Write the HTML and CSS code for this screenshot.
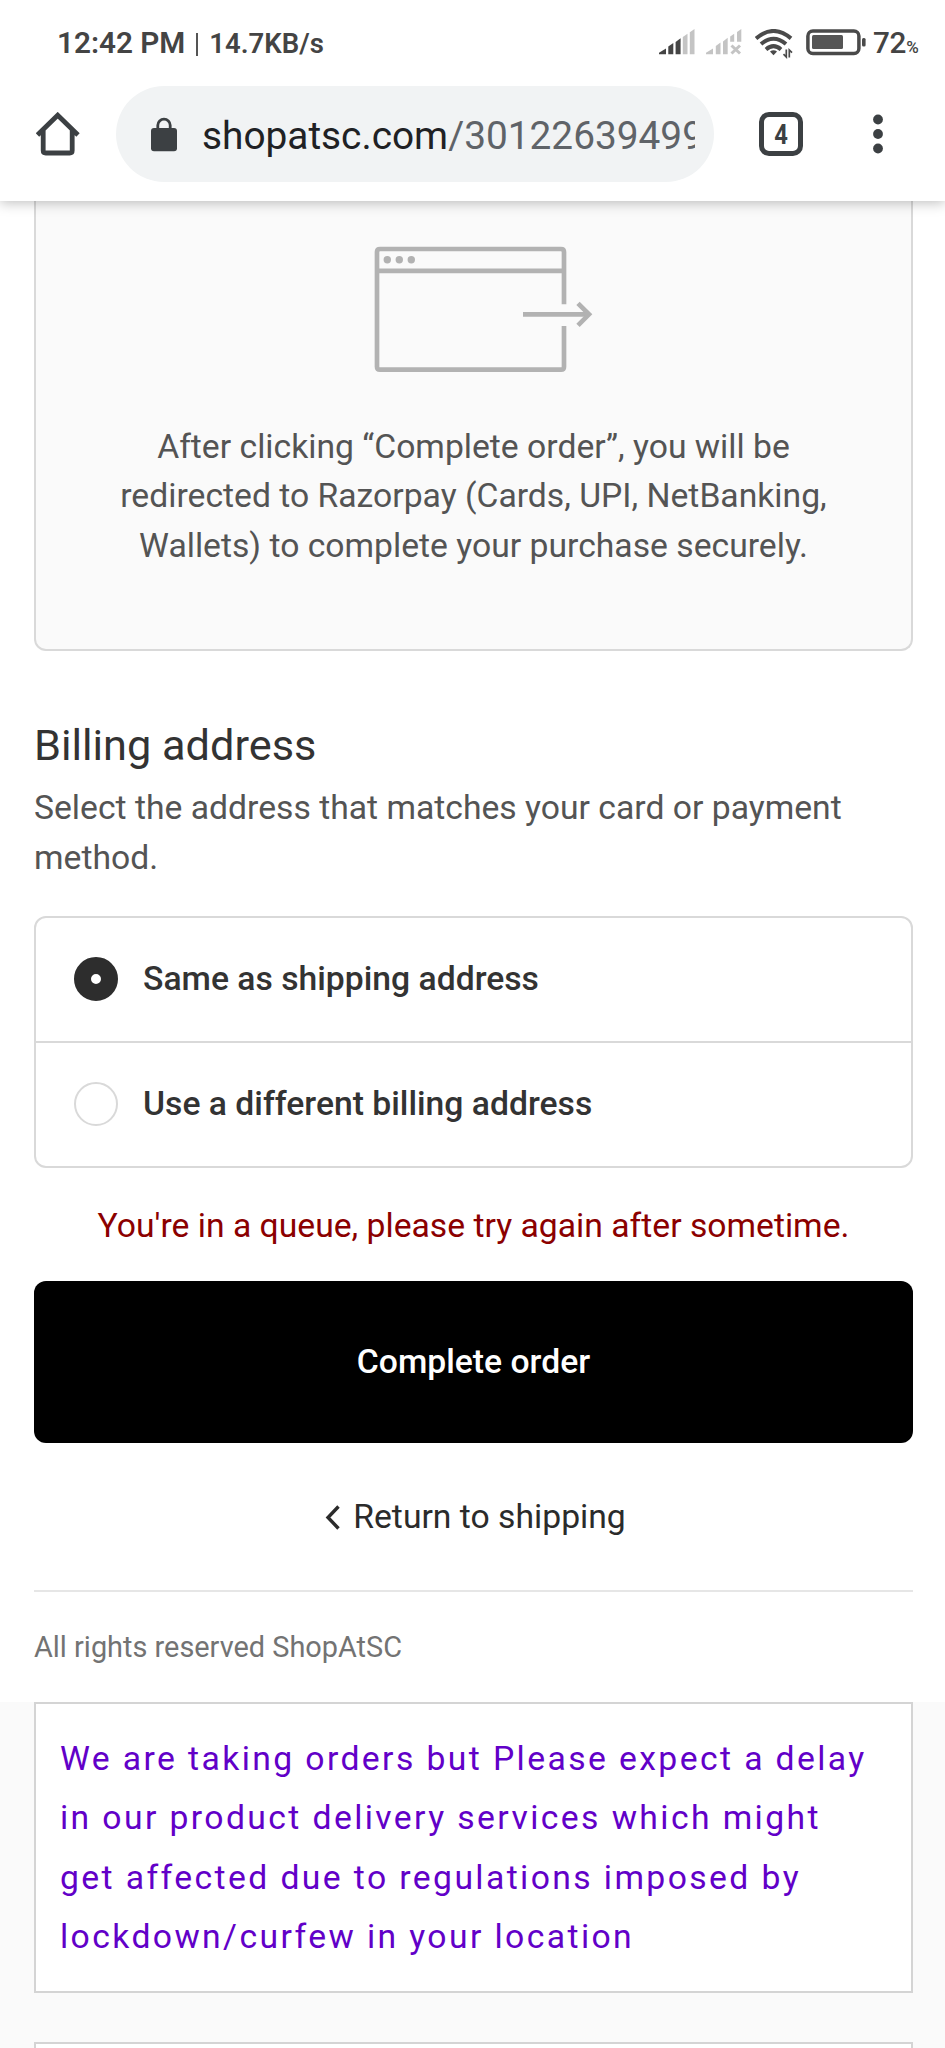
FILE: index.html
```html
<!DOCTYPE html>
<html lang="en">
  <head>
    <meta charset="UTF-8" />
    <meta name="viewport" content="width=device-width, initial-scale=1.0" />
    <title>Payment - ShopAtSC - Checkout</title>
    <link rel="stylesheet" href="styles.css">
  </head>
  <body>
    <header class="browser">
      <div class="status-bar">
        <div class="status-left">
          <span class="clock">12:42 PM</span>
          <span class="divider"></span>
          <span class="speed">14.7KB/s</span>
        </div>
        <div class="status-right">
          <svg class="signal" width="36" height="26" viewBox="0 0 36 26">
            <g fill="#444">
              <path d="M0 25.3v-1.5l7-4.3v5.8z" />
              <path d="M9.3 25.3V17.5l5-3.6v11.4z" />
              <path d="M16.6 25.3V13l5-3.8v16.1z" />
            </g>
            <g fill="#c4c4c4">
              <path d="M23.8 25.3V8l4.7-3.2v20.5z" />
              <path d="M30.8 25.3V3.2L35.5 0v25.3z" />
            </g>
          </svg>
          <svg class="signal-off" width="36" height="26" viewBox="0 0 36 26">
            <g fill="#c4c4c4">
              <path d="M0 25.3v-1.5l7-4.3v5.8z" />
              <path d="M9.8 25.3V17l4.7-3.6v11.9z" />
              <path d="M17 25.3V12.4l4.7-3.6v16.5z" />
              <path d="M24.2 12.8V7.6l4-2.8v8z" />
              <path d="M31 12.8V3L35.3 0v12.8z" />
            </g>
            <path d="M25.5 16.5l8.5 8M34 16.5l-8.5 8" stroke="#c4c4c4" stroke-width="3" fill="none" />
          </svg>
          <svg class="wifi" width="38" height="30" viewBox="0 0 38 30">
            <g fill="none" stroke="#4a4a4a" stroke-width="4">
              <path d="M1 9.4Q18.5 -5.4 36 9.4" />
              <path d="M6 15Q18.5 4.4 31 15" />
              <path d="M11 20.4Q18.5 14 26 20.4" />
            </g>
            <path d="M15 22.6Q18.5 19.8 22 22.6L18.5 26.3z" fill="#4a4a4a" />
            <path d="M31.3 20.5V28L28.5 25.2M34.3 28.5V21L37 23.7" fill="none" stroke="#4a4a4a" stroke-width="1.7" />
          </svg>
          <svg class="battery" width="60" height="27" viewBox="0 0 60 27">
            <rect x="1.9" y="1.9" width="51" height="22.6" rx="5" fill="none" stroke="#4a4a4a" stroke-width="3.5" />
            <rect x="6" y="6" width="31" height="14" rx="1.5" fill="#555" />
            <rect x="56" y="9" width="3.6" height="8.6" rx="1.5" fill="#4a4a4a" />
          </svg>
          <span class="percent">72<small>%</small></span>
        </div>
      </div>

      <div class="toolbar">
        <svg class="home" width="44" height="44" viewBox="0 0 44 44">
          <path d="M1.5 23L21.7 3.2L42 23M7.2 18.5V38.5Q7.2 41 9.7 41H33.7Q36.2 41 36.2 38.5V18.5" fill="none" stroke="#3c4043" stroke-width="4.8" />
        </svg>
        <div class="url-bar">
          <svg class="lock" width="26" height="35" viewBox="0 0 26 35">
            <path d="M6.8 13V8.3a6.2 6.2 0 0 1 12.4 0V13" fill="none" stroke="#3c4043" stroke-width="2.8" />
            <rect x="0" y="11" width="26" height="23.3" rx="3" fill="#3c4043" />
          </svg>
          <div class="url">shopatsc.com<span>/30122639499</span></div>
        </div>
        <div class="tabs"><span>4</span></div>
        <svg class="menu" width="10" height="40" viewBox="0 0 10 40">
          <g fill="#3c4043">
            <circle cx="5" cy="5.5" r="4.9" />
            <circle cx="5" cy="20" r="4.9" />
            <circle cx="5" cy="34.5" r="4.9" />
          </g>
        </svg>
      </div>
    </header>

    <main class="checkout">
      <section class="gateway">
        <svg class="redirect" width="220" height="128" viewBox="0 0 220 128">
          <g fill="none" stroke="#b2b2b2" stroke-width="4.7">
            <path d="M190 58.3V6Q190 3 187 3H6Q3 3 3 6V120.7Q3 123.7 6 123.7H187Q190 123.7 190 120.7V80" />
            <path d="M3 24.8H190M149 68.3H214" />
            <path d="M204 57.3L215 68.3L204 79.3" />
          </g>
          <g fill="#b2b2b2">
            <circle cx="13.3" cy="13.8" r="3.7" />
            <circle cx="25.3" cy="13.8" r="3.7" />
            <circle cx="37.3" cy="13.8" r="3.7" />
          </g>
        </svg>
        <p>After clicking “Complete order”, you will be redirected to Razorpay (Cards, UPI, NetBanking, Wallets) to complete your purchase securely.</p>
      </section>

      <section class="billing">
        <h2>Billing address</h2>
        <p>Select the address that matches your card or payment method.</p>
        <div class="options">
          <label class="option">
            <span class="radio checked"></span>
            Same as shipping address
          </label>
          <label class="option">
            <span class="radio"></span>
            Use a different billing address
          </label>
        </div>
      </section>

      <p class="queue">You're in a queue, please try again after sometime.</p>
      <button class="complete" type="button">Complete order</button>

      <a class="return" href="#">
        <svg width="16" height="25" viewBox="0 0 16 25">
          <path d="M13.5 1.5L3 12.5L13.5 23.5" fill="none" stroke="#2b2b2b" stroke-width="3.4" />
        </svg>
        Return to shipping
      </a>

      <footer class="copyright">All rights reserved ShopAtSC</footer>
    </main>

    <aside class="notices">
      <div class="notice">We are taking orders but Please expect a delay in our product delivery services which might get affected due to regulations imposed by lockdown/curfew in your location</div>
      <div class="notice"></div>
    </aside>
  </body>
</html>
```
FILE: styles.css
```css
* {
  box-sizing: border-box;
}

body {
  font-family: Roboto, sans-serif;
  font-size: 33.7px;
  line-height: 49.8px;
  background-color: #fff;
  color: #545454;
  margin: 0;
  height: 2048px;
  overflow: hidden;
}

p,
h2 {
  margin: 0;
}

svg {
  display: block;
  flex: none;
}

/* Browser chrome */
.browser {
  position: relative;
  z-index: 1;
  height: 201px;
  background-color: #fff;
  box-shadow: 0 2px 12px rgba(0, 0, 0, 0.25);
}

.status-bar {
  display: flex;
  justify-content: space-between;
  height: 86px;
  padding: 0 24px 0 57px;
  line-height: 1;
  color: #444;
}

.status-left {
  display: flex;
  align-items: baseline;
  padding-top: 28px;
  font-weight: 600;
}

.clock {
  font-size: 29.7px;
}

.divider {
  width: 2px;
  height: 23px;
  margin: 0 11px;
  transform: translateY(3px);
  background-color: #555;
}

.speed {
  font-size: 27.5px;
}

.status-right {
  display: flex;
  align-items: flex-start;
  padding-top: 29px;
}

.signal-off {
  margin-left: 11px;
}

.wifi {
  margin-left: 13px;
}

.battery {
  margin-left: 13px;
}

.percent {
  width: 48px;
  margin: -1px 0 0 7px;
  font-size: 29.7px;
  font-weight: 500;
  letter-spacing: -0.3px;
  white-space: nowrap;
}

.percent small {
  font-size: 17px;
}

.toolbar {
  display: flex;
  align-items: center;
  height: 96px;
  padding: 0 62px 0 36px;
}

.url-bar {
  display: flex;
  align-items: center;
  width: 598px;
  height: 96px;
  margin-left: 36px;
  padding: 0 19px 0 35px;
  border-radius: 48px;
  background-color: #f1f3f4;
}

.url {
  flex: 1;
  margin-left: 25px;
  padding-top: 3px;
  overflow: hidden;
  white-space: nowrap;
  font-size: 38.8px;
  color: #202124;
}

.url span {
  color: #5f6368;
}

.tabs {
  width: 44px;
  height: 44px;
  margin-left: 45px;
  border: 5px solid #3c4043;
  border-radius: 10px;
  font-size: 28px;
  font-weight: 700;
  line-height: 35px;
  text-align: center;
  color: #3c4043;
}

.tabs span {
  display: block;
  transform: scaleX(0.85);
}

.menu {
  margin-left: auto;
}

/* Checkout */
.checkout {
  height: 1501px;
  padding: 0 32px 0 34px;
}

.gateway {
  height: 450px;
  padding: 45px 60px 0;
  border: 2px solid #d9d9d9;
  border-top: 0;
  border-radius: 0 0 12px 12px;
  background-color: #fafafa;
  text-align: center;
}

.redirect {
  margin: 0 auto 47.5px 278px;
}

.billing h2 {
  padding-top: 65px;
  font-size: 43.3px;
  font-weight: 400;
  line-height: 60px;
  color: #333;
}

.billing p {
  padding-top: 7px;
}

.options {
  margin-top: 33px;
  border: 2px solid #d9d9d9;
  border-radius: 12px;
}

.option {
  display: flex;
  align-items: center;
  height: 123px;
  padding-left: 38px;
  font-weight: 500;
  color: #333;
}

.option + .option {
  height: 125px;
  border-top: 2px solid #d9d9d9;
}

.radio {
  width: 44px;
  height: 44px;
  margin-right: 25px;
  border: 2px solid #d9d9d9;
  border-radius: 50%;
}

.radio.checked {
  border: 17px solid #2d2d2d;
  background-color: #fff;
}

.queue {
  margin-top: 33px;
  text-align: center;
  color: #8b0000;
}

.complete {
  display: block;
  width: 100%;
  height: 162px;
  margin-top: 31px;
  border: none;
  border-radius: 12px;
  background-color: #000;
  color: #fff;
  font: inherit;
  font-weight: 500;
}

.return {
  display: flex;
  align-items: center;
  justify-content: center;
  gap: 12px;
  margin-top: 49px;
  padding-left: 4px;
  color: #2b2b2b;
  text-decoration: none;
}

.copyright {
  margin-top: 48px;
  padding-top: 31px;
  border-top: 2px solid #e6e6e6;
  font-size: 28.9px;
  color: #737373;
}

/* Order summary notices */
.notices {
  height: 346px;
  padding: 0 32px 0 34px;
  background-color: #fafafa;
  overflow: hidden;
}

.notice {
  height: 291px;
  margin-bottom: 49px;
  padding: 25px 36px 25px 24px;
  border: 2px solid #d4d4d4;
  background-color: #fff;
  line-height: 59.4px;
  letter-spacing: 2.4px;
  color: #6200c8;
}
```
